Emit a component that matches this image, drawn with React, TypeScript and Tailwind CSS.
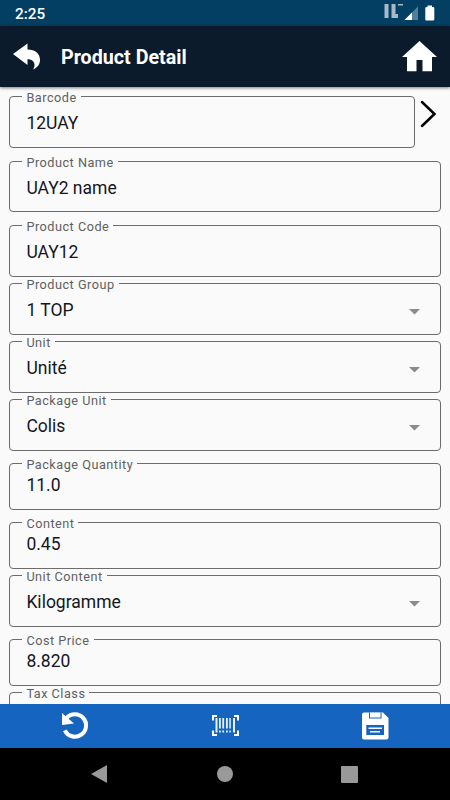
import React from "react";

type Field = {
  label: string;
  value: string;
  box: string;
  select?: boolean;
};

// Each box height includes the 6px of the label above the outline
const fields: Field[] = [
  { label: "Product Name", value: "UAY2 name", box: "mt-[7px] h-[57px]" },
  { label: "Product Code", value: "UAY12", box: "mt-[7px] h-[58px]" },
  { label: "Product Group", value: "1 TOP", box: "h-[58px]", select: true },
  { label: "Unit", value: "Unité", box: "h-[58px]", select: true },
  { label: "Package Unit", value: "Colis", box: "h-[58px]", select: true },
  { label: "Package Quantity", value: "11.0", box: "mt-[6px] h-[53px]" },
  { label: "Content", value: "0.45", box: "mt-[6px] h-[53px]" },
  { label: "Unit Content", value: "Kilogramme", box: "h-[58px]", select: true },
  { label: "Cost Price", value: "8.820", box: "mt-[6px] h-[53px]" },
  { label: "Tax Class", value: "", box: "h-[58px]", select: true },
];

const OutlinedField = ({ label, value, box, select }: Field) => (
  <fieldset className={`${box} min-w-0 shrink-0 rounded-[4px] border border-[#6c6c6c] pl-[16.4px] pr-5`}>
    <legend className="-ml-1 h-[13px] px-1 text-[12.7px] leading-[15px] tracking-[0.5px] whitespace-nowrap text-[#606060]">
      {label}
    </legend>
    <div className={`flex items-center justify-between ${box.includes("53px") ? "h-[30px]" : "h-[40px]"}`}>
      <span className="text-[17.5px] leading-[22px] text-[#14161f]">{value}</span>
      {select && (
        <svg width="11" height="6" viewBox="0 0 11 6" className="mt-[3px]">
          <path d="M0 0H11L5.5 5.5Z" fill="#8b8b8b" />
        </svg>
      )}
    </div>
  </fieldset>
);

const StatusBar = () => (
  <div className="flex h-[26px] shrink-0 items-center justify-between bg-[#033f63] pl-[15px] text-white">
    <span className="pt-[2px] text-[15.3px] leading-5 font-medium">2:25</span>
    <svg width="70" height="26" viewBox="380 0 70 26">
      <path d="M384.500 4h4v14h-4zM391.500 4h4v10h2.500v4h-6.500zM398 4h5v1.500h-5z" fill="#a7bac8" />
      <path d="M418 6.500v13.500h-13.500z" fill="#52809c" />
      <path d="M412 12.500v7.500h-7.500z" fill="#fff" />
      <path d="M427.500 5.500h4.500V7h1q1.300 0 1.300 1v11.500q0 1-1.300 1h-6.500q-1.200 0-1.200-1V8q0-1 1.200-1h1z" fill="#fff" />
    </svg>
  </div>
);

const Header = () => (
  <header className="z-10 flex h-[61px] shrink-0 items-center bg-[#0b1b2c] pr-[13px] pl-[13px] text-white shadow-[0_1px_3px_rgba(0,0,0,0.5)]">
    <svg width="28" height="27" viewBox="13 43.500 28 27" fill="#fff">
      <path d="M13 54.500 27.500 44V50C35 50 40 54 40 60.500C40 65 37.500 68 33 70C36 66 35 60 27.500 59.500V65.500Z" />
    </svg>
    <h1 className="ml-5 grow pt-[2px] text-[19.7px] leading-6 font-bold">Product Detail</h1>
    <svg width="35" height="31" viewBox="402 41 35 31" fill="#fff">
      <path d="M419.500 41 437 57h-5v14.300h-9.500V60h-6v11.300H407V57h-5z" />
    </svg>
  </header>
);

const ActionBar = () => (
  <footer className="flex h-[44px] shrink-0 items-center bg-[#1565c0]">
    <button className="flex flex-1 justify-center">
      <svg width="28" height="28" viewBox="61 711.500 28 28">
        <path d="M66.500 717.500A11.200 11.200 0 1 1 64.800 729.800" fill="none" stroke="#fff" strokeWidth="4" />
        <path d="M62 712.500 74 723 62 724.500z" fill="#fff" />
      </svg>
    </button>
    <button className="flex flex-1 justify-center">
      <svg width="28" height="24" viewBox="211 714 28 24">
        <path d="M217 716h-4v4.500M217 735h-4v-4.500M234 716h4v4.500M234 735h4v-4.500" fill="none" stroke="#fff" strokeWidth="2" />
        <path
          d="M215.500 718h2v14.500h-2zM219 718h1.800v10.500H219zM222.300 718h1.800v10.500h-1.800zM226 718h1.800v10.500H226zM229.300 718h1.500v10.500h-1.500zM233 718h2v14.500h-2zM219 730.500h1.800v2H219zM222.300 730.500h1.800v2h-1.800zM226 730.500h1.800v2H226zM229.300 730.500h1.500v2h-1.500z"
          fill="#fff"
          fillOpacity="0.9"
        />
      </svg>
    </button>
    <button className="flex flex-1 justify-center">
      <svg width="28" height="28" viewBox="361 711.500 28 28">
        <path d="M364 712h19l5.500 5.500V737q0 2-2 2H364q-2 0-2-2V714q0-2 2-2z" fill="#fff" />
        <path d="M369 712h12.500v6H369zM366.300 724.500h17.700v10h-17.700z" fill="#1565c0" />
        <path d="M370 712h10.500v5H370zM368.500 727h13.500v1.500h-13.500zM370 730.500h10v1.500h-10z" fill="#fff" />
      </svg>
    </button>
  </footer>
);

const NavigationBar = () => (
  <nav className="flex h-[52px] shrink-0 items-center bg-black pl-[91px] text-[#999]">
    <svg width="16" height="18" viewBox="0 0 16 18" fill="currentColor">
      <path d="M0 9 16 0V18Z" />
    </svg>
    <div className="ml-[110px] size-4 rounded-full bg-[#999]" />
    <div className="ml-[108px] size-[17px] rounded-[1px] bg-[#999]" />
  </nav>
);

export default function App() {
  return (
    <div className="flex h-[800px] w-[450px] flex-col overflow-hidden bg-[#fafafa] font-[Roboto,sans-serif]">
      <StatusBar />
      <Header />
      <main className="flex min-h-0 grow flex-col overflow-hidden px-[9px] pt-[3px]">
        <div className="flex shrink-0">
          <div className="w-[406px]">
            <OutlinedField label="Barcode" value="12UAY" box="h-[58px]" />
          </div>
          <svg width="18" height="30" viewBox="419 99 18 30" className="mt-[9px] ml-1">
            <path d="M422 102 434.500 114 422 126" fill="none" stroke="#000" strokeWidth="2.500" strokeLinecap="round" />
          </svg>
        </div>
        {fields.map((field) => (
          <OutlinedField key={field.label} {...field} />
        ))}
      </main>
      <ActionBar />
      <NavigationBar />
    </div>
  );
}
